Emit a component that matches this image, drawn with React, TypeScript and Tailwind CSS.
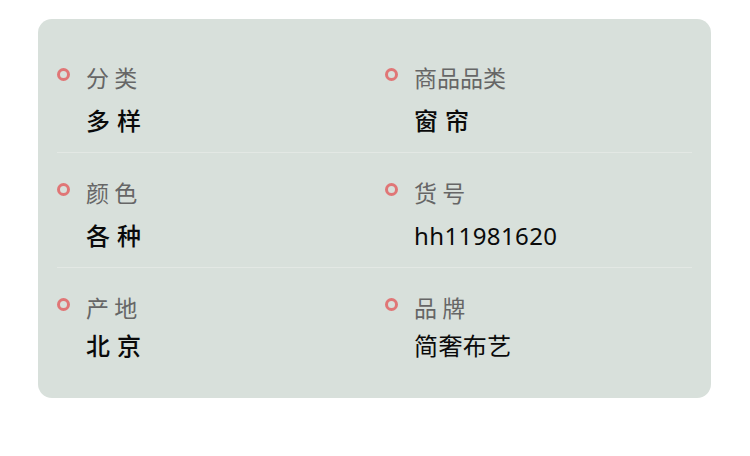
import React from "react";

type Item = { label: string; value: string; strong?: boolean };

const rows: { left: Item; right: Item; last?: boolean }[] = [
  {
    left: { label: "分 类", value: "多 样", strong: true },
    right: { label: "商品品类", value: "窗 帘", strong: true },
  },
  {
    left: { label: "颜 色", value: "各 种", strong: true },
    right: { label: "货 号", value: "hh11981620" },
  },
  {
    left: { label: "产 地", value: "北 京", strong: true },
    right: { label: "品 牌", value: "简奢布艺" },
    last: true,
  },
];

const Cell: React.FC<{ item: Item; last?: boolean }> = ({ item, last }) => (
  <div className="flex items-start">
    <span className="mt-[6px] block h-[13px] w-[13px] shrink-0 rounded-full border-[3px] border-[#e07676]" />
    <div className={`ml-[16px] flex flex-col ${last ? "gap-[7px]" : "gap-[12px]"}`}>
      <span className="text-[23px] leading-[31px] text-[#666]">{item.label}</span>
      <span
        className={`text-[24px] leading-[32px] tracking-[0.4px] text-[#0a0a0a] ${
          item.strong ? "font-medium" : "font-normal"
        }`}
        style={{ fontFamily: '"Noto Sans", "Noto Sans CJK SC", sans-serif' }}
      >
        {item.value}
      </span>
    </div>
  </div>
);

const App: React.FC = () => {
  return (
    <div
      className="min-h-[456px] w-[750px] bg-white pt-[19px] pl-[38px]"
      style={{ fontFamily: '"Noto Sans CJK SC", "Noto Sans", sans-serif' }}
    >
      <div className="w-[673px] rounded-[14px] bg-[#d8e0db] px-[19px] pt-[19px] pb-[21px]">
        {rows.map((r, i) => (
          <div
            key={i}
            className={`grid grid-cols-[328px_1fr] pt-[24px] pb-[15px] ${
              r.last ? "" : "border-b border-[#e3e8e4]"
            }`}
          >
            <Cell item={r.left} last={r.last} />
            <Cell item={r.right} last={r.last} />
          </div>
        ))}
      </div>
    </div>
  );
};

export default App;
